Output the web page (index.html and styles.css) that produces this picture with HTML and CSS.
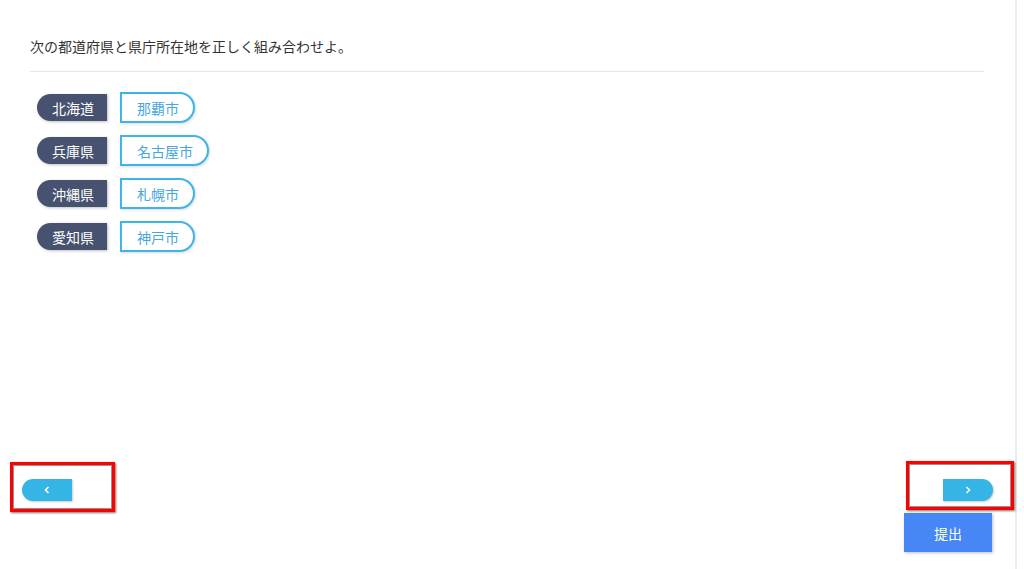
FILE: index.html
```html
<!DOCTYPE html>
<html lang="ja">
<head>
<meta charset="utf-8">
<title>Quiz</title>
<link rel="stylesheet" href="styles.css">
</head>
<body>
<div class="page">
  <main class="content">
    <p class="question">次の都道府県と県庁所在地を正しく組み合わせよ。</p>
    <ul class="pairs">
      <li class="pair"><span class="pref">北海道</span><span class="city">那覇市</span></li>
      <li class="pair"><span class="pref">兵庫県</span><span class="city">名古屋市</span></li>
      <li class="pair"><span class="pref">沖縄県</span><span class="city">札幌市</span></li>
      <li class="pair"><span class="pref">愛知県</span><span class="city">神戸市</span></li>
    </ul>
  </main>
  <footer class="footer">
    <div class="mark mark-left">
      <button class="nav nav-prev" type="button" aria-label="前へ">
        <svg width="6" height="8" viewBox="0 0 6 8"><polyline points="4.5,1 1.5,4 4.5,7" fill="none" stroke="#fff" stroke-width="1.6"/></svg>
      </button>
    </div>
    <div class="right-col">
      <div class="mark mark-right">
        <button class="nav nav-next" type="button" aria-label="次へ">
          <svg width="6" height="8" viewBox="0 0 6 8"><polyline points="1.5,1 4.5,4 1.5,7" fill="none" stroke="#fff" stroke-width="1.6"/></svg>
        </button>
      </div>
      <button class="submit" type="button">提出</button>
    </div>
  </footer>
</div>
</body>
</html>
```
FILE: styles.css
```css
* { box-sizing: border-box; }
html, body { margin: 0; padding: 0; background: #fff; }
body {
  font-family: "Noto Sans CJK JP", "Noto Sans", sans-serif;
  color: #333;
  width: 1024px;
  height: 569px;
  overflow: hidden;
}
.page {
  width: 1017px;
  height: 569px;
  border-right: 2px solid #ebebeb;
  display: flex;
  flex-direction: column;
}
.content { flex: 1; }
.question {
  margin: 0 31px 0 30px;
  padding: 36px 0 15px;
  font-size: 14px;
  line-height: 20px;
  color: #333;
  border-bottom: 1px solid #e6e6e6;
}
.pairs {
  list-style: none;
  margin: 20px 0 0 37px;
  padding: 0;
  display: flex;
  flex-direction: column;
  gap: 12px;
}
.pair {
  display: flex;
  align-items: center;
  gap: 13px;
  height: 31px;
}
.pref {
  display: inline-flex;
  align-items: center;
  height: 27px;
  padding: 0 13px 0 15px;
  background: #465270;
  color: #fff;
  font-size: 14px;
  border-radius: 14px 0 0 14px;
  box-shadow: 1px 1px 3px rgba(0,0,0,0.25);
}
.city {
  display: inline-flex;
  align-items: center;
  height: 31px;
  padding: 0 14px 0 15px;
  border: 2px solid #3db5e8;
  border-radius: 0 16px 16px 0;
  color: #47a6de;
  font-size: 14px;
  background: #fff;
  box-shadow: 1px 1px 3px rgba(0,0,0,0.15);
}
.footer {
  display: flex;
  justify-content: space-between;
  align-items: flex-start;
  padding: 0 1px 17px 10px;
}
.mark {
  border: 3px solid #f00;
  box-shadow: inset 0 0 0 1px rgba(60,60,60,0.55), 1px 1px 2px rgba(0,0,0,0.55);
}
.mark-left {
  width: 105px;
  height: 50px;
  margin-top: 1px;
  padding: 14px 0 0 9px;
}
.mark-right {
  width: 108px;
  height: 49px;
  padding: 15px 0 0 34px;
}
.right-col {
  display: flex;
  flex-direction: column;
  align-items: flex-start;
}
.nav {
  width: 50px;
  height: 22px;
  border: 0;
  padding: 0;
  background: #35b4e6;
  display: flex;
  align-items: center;
  justify-content: center;
  box-shadow: 1px 1px 2px rgba(0,0,0,0.2);
  cursor: pointer;
}
.nav-prev { border-radius: 11px 0 0 11px; }
.nav-next { border-radius: 0 11px 11px 0; }
.submit {
  margin: 3px 0 0 -2px;
  width: 88px;
  height: 39px;
  border: 0;
  background: #4687f5;
  color: #fff;
  font-family: "Noto Sans CJK JP", "Noto Sans", sans-serif;
  font-size: 14px;
  box-shadow: 1px 1px 3px rgba(0,0,0,0.25);
  cursor: pointer;
}
```
